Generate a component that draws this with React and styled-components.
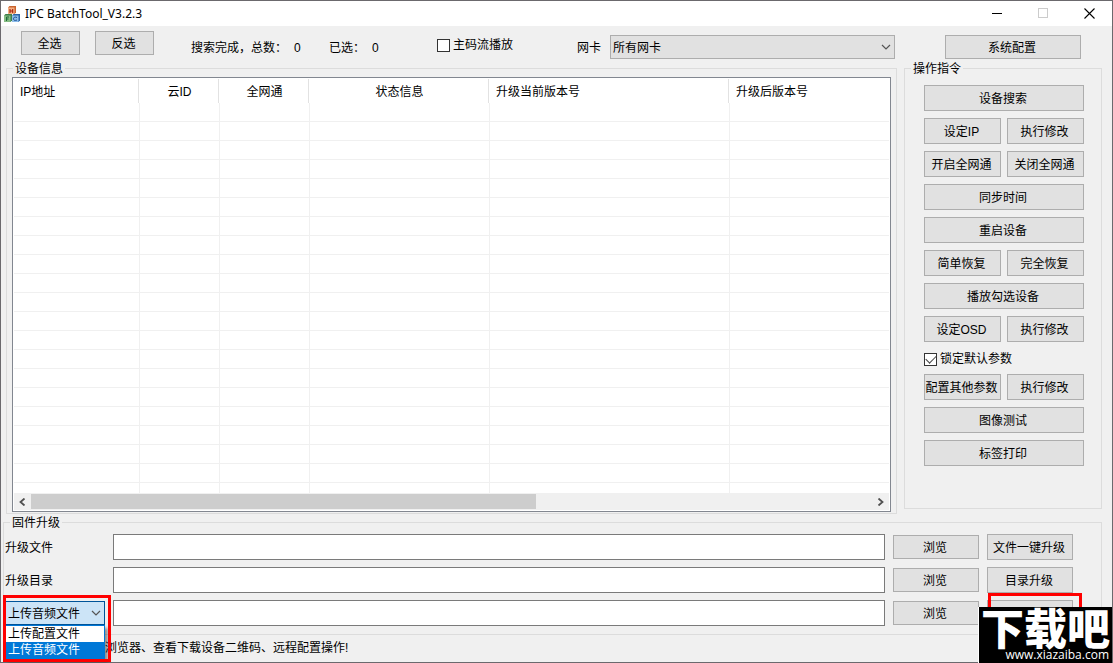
import { useState } from "react";
import styled, { createGlobalStyle } from "styled-components";

const columns = [
  { title: "IP地址", width: 126 },
  { title: "云ID", width: 80, center: true },
  { title: "全网通", width: 90, center: true },
  { title: "状态信息", width: 180, center: true },
  { title: "升级当前版本号", width: 240 },
  { title: "升级后版本号" },
];

const emptyRows = Array.from({ length: 21 }, (_, i) => i);

const uploadTypes = ["上传配置文件", "上传音频文件"];

const AppIcon = () => (
  <svg width="16" height="16" viewBox="0 0 16 16" aria-hidden="true">
    <path d="M4 1.500l1.500-1.500h6.500v6.500l-1.500 1.500H4z" fill="#c9642f" />
    <rect x="4" y="1.500" width="6.500" height="6.500" fill="#f5b083" />
    <path d="M6 3v4M8.700 3v4M6 5h2.700" stroke="#a3200f" strokeWidth="1.100" />
    <path d="M0 9.500l1.500-1.500h6.500v6.500l-1.500 1.500H0z" fill="#3f7f4a" />
    <rect x="0" y="9.500" width="6.500" height="6.500" fill="#86bd84" />
    <path d="M2.500 15v-4h2.500M2.500 13h2" stroke="#1f6a38" fill="none" />
    <path d="M8 9.500l1.500-1.500h6.500v6.500l-1.500 1.500H8z" fill="#2a65aa" />
    <rect x="8" y="9.500" width="6.500" height="6.500" fill="#8dbdea" />
    <path d="M13 11.500c-2.500-1-3.500 0-3.500 1.300s1 2.200 3.500 1.200" stroke="#1c4f94" fill="none" />
  </svg>
);

const Chevron = () => (
  <svg width="10" height="6" viewBox="0 0 10 6" aria-hidden="true">
    <path d="M1 1l4 4 4-4" fill="none" stroke="#555" strokeWidth="1.2" />
  </svg>
);

const ScrollArrow = ({ flip }) => (
  <svg width="7" height="8" viewBox="0 0 7 8" aria-hidden="true">
    <path
      d={flip ? "M1.500 0.500l4 3.500-4 3.500" : "M5.500 0.500l-4 3.500 4 3.500"}
      fill="none"
      stroke="#505050"
      strokeWidth="1.800"
    />
  </svg>
);

const CheckItem = ({ id, label, checked, onChange }) => (
  <CheckLabel htmlFor={id}>
    <CheckBox id={id} type="checkbox" checked={checked} onChange={onChange} />
    {label}
  </CheckLabel>
);

const DeviceList = () => (
  <ListBox>
    <TableArea>
      <Table>
        <colgroup>
          {columns.map((col) => (
            <Col key={col.title} $width={col.width} />
          ))}
        </colgroup>
        <thead>
          <tr>
            {columns.map((col) => (
              <Th key={col.title} $center={col.center}>
                {col.title}
              </Th>
            ))}
          </tr>
        </thead>
        <tbody>
          {emptyRows.map((row) => (
            <tr key={row}>
              {columns.map((col) => (
                <Td key={col.title} />
              ))}
            </tr>
          ))}
        </tbody>
      </Table>
    </TableArea>
    <ScrollBar>
      <ScrollButton aria-label="向左滚动">
        <ScrollArrow />
      </ScrollButton>
      <ScrollTrack>
        <ScrollThumb />
      </ScrollTrack>
      <ScrollButton aria-label="向右滚动">
        <ScrollArrow flip />
      </ScrollButton>
    </ScrollBar>
  </ListBox>
);

const App = () => {
  const [mainStream, setMainStream] = useState(false);
  const [locked, setLocked] = useState(true);
  const [uploadType, setUploadType] = useState("上传音频文件");

  return (
    <>
      <GlobalStyle />
      <Window>
        <TitleBar>
          <AppIcon />
          <Title>IPC BatchTool_V3.2.3</Title>
          <WindowButton aria-label="最小化">
            <svg width="11" height="11" viewBox="0 0 11 11">
              <path d="M0 5.500h10" stroke="#000" />
            </svg>
          </WindowButton>
          <WindowButton aria-label="最大化" disabled>
            <svg width="11" height="11" viewBox="0 0 11 11">
              <rect x="0.500" y="0.500" width="9" height="9" fill="none" stroke="#ccc" />
            </svg>
          </WindowButton>
          <WindowButton aria-label="关闭">
            <svg width="11" height="11" viewBox="0 0 11 11">
              <path d="M0.500 0.500l10 10M10.500 0.500l-10 10" stroke="#000" strokeWidth="1.100" />
            </svg>
          </WindowButton>
        </TitleBar>

        <ToolBar>
          <SelectButtons>
            <Button $small>全选</Button>
            <Button $small>反选</Button>
          </SelectButtons>
          <Stat $width={138}>
            搜索完成，总数：<span>0</span>
          </Stat>
          <Stat $width={108}>
            已选：<span>0</span>
          </Stat>
          <StreamOption>
            <CheckItem
              id="mainStream"
              label="主码流播放"
              checked={mainStream}
              onChange={(e) => setMainStream(e.target.checked)}
            />
          </StreamOption>
          <CardLabel htmlFor="networkCard">网卡</CardLabel>
          <SelectWrap $grow>
            <Select id="networkCard">
              <option>所有网卡</option>
            </Select>
            <Chevron />
          </SelectWrap>
          <ConfigButton $small>系统配置</ConfigButton>
        </ToolBar>

        <Main>
          <DeviceGroup>
            <Legend>设备信息</Legend>
            <DeviceBody>
              <DeviceList />
            </DeviceBody>
          </DeviceGroup>

          <CommandGroup>
            <Legend>操作指令</Legend>
            <Commands>
              <WideButton>设备搜索</WideButton>
              <Button>设定IP</Button>
              <Button>执行修改</Button>
              <Button>开启全网通</Button>
              <Button>关闭全网通</Button>
              <WideButton>同步时间</WideButton>
              <WideButton>重启设备</WideButton>
              <Button>简单恢复</Button>
              <Button>完全恢复</Button>
              <WideButton>播放勾选设备</WideButton>
              <Button>设定OSD</Button>
              <Button>执行修改</Button>
              <LockRow>
                <CheckItem
                  id="lockParams"
                  label="锁定默认参数"
                  checked={locked}
                  onChange={(e) => setLocked(e.target.checked)}
                />
              </LockRow>
              <Button>配置其他参数</Button>
              <Button>执行修改</Button>
              <WideButton>图像测试</WideButton>
              <WideButton>标签打印</WideButton>
            </Commands>
          </CommandGroup>
        </Main>

        <UpgradeGroup>
          <Legend>固件升级</Legend>
          <UpgradeGrid>
            <FieldLabel htmlFor="upgradeFile">升级文件</FieldLabel>
            <Input id="upgradeFile" type="text" />
            <Button $small>浏览</Button>
            <Button>文件一键升级</Button>

            <FieldLabel htmlFor="upgradeDir">升级目录</FieldLabel>
            <Input id="upgradeDir" type="text" />
            <Button $small>浏览</Button>
            <Button>目录升级</Button>

            <UploadPicker>
              <SelectWrap>
                <Select
                  $active
                  aria-label="上传类型"
                  value={uploadType}
                  onChange={(e) => setUploadType(e.target.value)}
                >
                  {uploadTypes.map((type) => (
                    <option key={type}>{type}</option>
                  ))}
                </Select>
                <Chevron />
              </SelectWrap>
              <Options role="listbox" aria-label="上传类型">
                {uploadTypes.map((type) => (
                  <Option
                    key={type}
                    role="option"
                    aria-selected={type === uploadType}
                    $selected={type === uploadType}
                    onClick={() => setUploadType(type)}
                  >
                    {type}
                  </Option>
                ))}
              </Options>
              <PickerMark />
            </UploadPicker>
            <Input type="text" aria-label="上传文件" />
            <Button $small>浏览</Button>
            <UploadCell>
              <Button aria-label="上传" />
              <UploadMark />
            </UploadCell>
          </UpgradeGrid>
        </UpgradeGroup>

        <StatusBar>浏览器、查看下载设备二维码、远程配置操作!</StatusBar>

        <SiteLogo>
          <SiteName>下载吧</SiteName>
          <SiteUrl>www.xiazaiba.com</SiteUrl>
        </SiteLogo>
      </Window>
    </>
  );
};

export default App;

const GlobalStyle = createGlobalStyle`
  * {
    box-sizing: border-box;
  }
  body {
    margin: 0;
    background-color: #f0f0f0;
  }
  body, button, input, select {
    font-family: "Liberation Sans", "Noto Sans CJK SC", sans-serif;
    font-size: 12px;
    line-height: 16px;
    color: #000;
  }
`;

const Window = styled.div`
  position: relative;
  min-height: 100vh;
  display: flex;
  flex-direction: column;
  border: 1px solid #6b696d;
  background-color: #f0f0f0;
`;

const TitleBar = styled.header`
  height: 25px;
  display: flex;
  align-items: center;
  padding-left: 3px;
  background-color: #fff;
`;
const Title = styled.h1`
  flex: 1;
  margin: 0 0 0 5px;
  font-family: "Noto Sans", "Open Sans", sans-serif;
  font-size: 12px;
  font-weight: 400;
`;
const WindowButton = styled.button`
  width: 46px;
  height: 25px;
  padding: 0;
  display: flex;
  align-items: center;
  justify-content: center;
  border: none;
  background: none;
`;

const ToolBar = styled.div`
  height: 34px;
  display: flex;
  align-items: flex-end;
  padding: 0 31px 1px 20px;
`;
const Button = styled.button`
  min-width: 0;
  height: ${({ $small }) => ($small ? "24px" : "26px")};
  padding: 2px 2px 0 0;
  border: 1px solid #adadad;
  background-color: #e1e1e1;
  white-space: nowrap;
  &:hover {
    border-color: #0078d7;
    background-color: #e5f1fb;
  }
`;
const SelectButtons = styled.div`
  align-self: flex-start;
  display: grid;
  grid-template-columns: 59px 59px;
  gap: 15px;
  margin: 5px 37px 0 0;
`;
const Stat = styled.div`
  width: ${({ $width }) => $width}px;
  height: 24px;
  line-height: 26px;
  white-space: nowrap;
  span {
    margin-left: 7px;
  }
`;
const StreamOption = styled.div`
  width: 140px;
  padding-bottom: 6px;
`;
const CheckLabel = styled.label`
  display: flex;
  align-items: center;
  gap: 3px;
  white-space: nowrap;
`;
const CheckBox = styled.input`
  appearance: none;
  width: 13px;
  height: 13px;
  margin: 0;
  border: 1px solid #333;
  background-color: #fff;
  &:checked::before {
    content: "";
    display: block;
    width: 9px;
    height: 5px;
    margin: 1px 0 0 1px;
    border: solid #444;
    border-width: 0 0 1px 1px;
    transform: rotate(-45deg);
  }
`;
const CardLabel = styled.label`
  width: 33px;
  height: 24px;
  line-height: 26px;
`;
const SelectWrap = styled.div`
  position: relative;
  flex: ${({ $grow }) => ($grow ? 1 : "none")};
  display: flex;
  svg {
    position: absolute;
    right: 4px;
    top: 9px;
    pointer-events: none;
  }
`;
const Select = styled.select`
  appearance: none;
  width: 100%;
  height: 24px;
  padding: 2px 2px 0;
  border: 1px solid ${({ $active }) => ($active ? "#005499" : "#adadad")};
  border-radius: 0;
  background-color: ${({ $active }) => ($active ? "#cce4f7" : "#e1e1e1")};
`;
const ConfigButton = styled(Button)`
  width: 136px;
  margin-left: 50px;
`;

const Main = styled.main`
  flex: 1;
  display: flex;
  gap: 7px;
  padding: 0 10px 0 5px;
`;
const Group = styled.fieldset`
  min-width: 0;
  margin: 0;
  padding: 0;
  border: 1px solid #dcdcdc;
`;
const Legend = styled.legend`
  height: 16px;
  margin-left: 6px;
  padding: 0 2px;
  line-height: 18px;
`;
const DeviceGroup = styled(Group)`
  flex: 1;
  display: flex;
`;
const DeviceBody = styled.div`
  flex: 1;
  min-width: 0;
  display: flex;
  padding: 1px 5px;
`;
const CommandGroup = styled(Group)`
  width: 198px;
  margin-bottom: 5px;
`;
const Commands = styled.div`
  display: grid;
  grid-template-columns: 1fr 1fr;
  gap: 7px 6px;
  padding: 9px 17px 9px 19px;
`;
const WideButton = styled(Button)`
  grid-column: span 2;
`;
const LockRow = styled.div`
  grid-column: span 2;
  height: 18px;
  padding-top: 2px;
`;

const ListBox = styled.div`
  flex: 1;
  min-width: 0;
  display: flex;
  flex-direction: column;
  padding: 1px;
  border: 1px solid #828790;
  background-color: #fff;
`;
const TableArea = styled.div`
  flex: 1 1 0;
  min-height: 0;
  overflow: hidden;
`;
const Table = styled.table`
  width: 100%;
  table-layout: fixed;
  border-collapse: separate;
  border-spacing: 0;
`;
const Col = styled.col`
  width: ${({ $width }) => ($width ? `${$width}px` : "auto")};
`;
const Th = styled.th`
  height: 24px;
  padding: 1px 7px 0 6px;
  font-weight: 400;
  text-align: ${({ $center }) => ($center ? "center" : "left")};
  white-space: nowrap;
  background: linear-gradient(#e2e2e2, #e2e2e2) no-repeat right 1px top / 1px 24px;
  &:last-child {
    background: none;
  }
`;
const Td = styled.td`
  height: 19px;
  padding: 0;
  border-right: 1px solid #f0f0f0;
  border-bottom: 1px solid #f0f0f0;
  &:last-child {
    border-right: none;
  }
`;
const ScrollBar = styled.div`
  height: 17px;
  display: flex;
  background-color: #f0f0f0;
`;
const ScrollButton = styled.button`
  width: 17px;
  padding: 0;
  display: flex;
  align-items: center;
  justify-content: center;
  border: none;
  background: none;
`;
const ScrollTrack = styled.div`
  flex: 1;
  padding: 1px 0;
`;
const ScrollThumb = styled.div`
  width: 60%;
  height: 15px;
  background-color: #cdcdcd;
`;

const UpgradeGroup = styled(Group)`
  margin: 0 10px 0 2px;
`;
const UpgradeGrid = styled.div`
  display: grid;
  grid-template-columns: 100px 1fr 86px 86px;
  align-items: center;
  gap: 7px 8px;
  padding: 4px 28px 8px 1px;
`;
const FieldLabel = styled.label`
  padding-top: 2px;
`;
const Input = styled.input`
  width: 100%;
  height: 26px;
  padding: 0 4px;
  border: 1px solid #7a7a7a;
  background-color: #fff;
`;
const UploadPicker = styled.div`
  position: relative;
`;
const Options = styled.ul`
  position: absolute;
  z-index: 1;
  top: 24px;
  left: 0;
  right: 0;
  margin: 0;
  padding: 0;
  border: 1px solid #0078d7;
  background-color: #fff;
  box-shadow: 3px 3px 3px rgba(0, 0, 0, 0.4);
  list-style: none;
`;
const Option = styled.li`
  padding-left: 2px;
  line-height: 16px;
  color: ${({ $selected }) => ($selected ? "#fff" : "#000")};
  background-color: ${({ $selected }) => ($selected ? "#0078d7" : "#fff")};
`;
const Mark = styled.div`
  position: absolute;
  border: 3px solid #f00;
  pointer-events: none;
`;
const PickerMark = styled(Mark)`
  z-index: 2;
  top: -6px;
  left: -2px;
  width: 108px;
  height: 67px;
`;
const UploadCell = styled.div`
  position: relative;
  display: grid;
`;
const UploadMark = styled(Mark)`
  top: -7px;
  left: 1px;
  width: 94px;
  height: 40px;
`;

const StatusBar = styled.footer`
  height: 27px;
  padding-left: 104px;
  line-height: 26px;
`;

const SiteLogo = styled.div`
  position: absolute;
  z-index: 3;
  right: 0;
  bottom: -1px;
  width: 134px;
  height: 56px;
  border-left: 1px solid #fff;
  background-color: #000;
  color: #fff;
  white-space: nowrap;
`;
const SiteName = styled.div`
  height: 41px;
  font-family: "Noto Sans CJK SC", sans-serif;
  font-size: 43px;
  font-weight: 900;
  line-height: 38px;
  text-align: center;
`;
const SiteUrl = styled.div`
  padding-right: 3px;
  font-family: "Open Sans", sans-serif;
  font-size: 12px;
  line-height: 14px;
  text-align: right;
`;
